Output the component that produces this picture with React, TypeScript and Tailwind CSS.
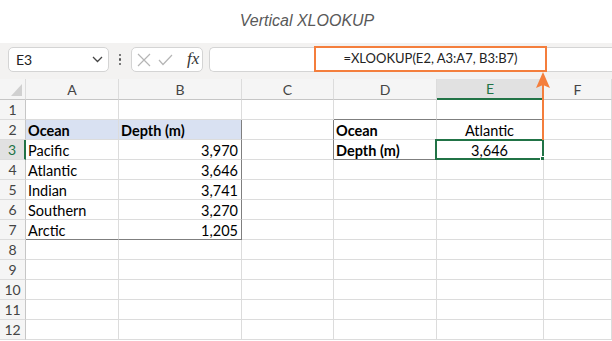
import React from "react";

const COLS = ["A", "B", "C", "D", "E", "F"];

type Cell = { t: string; bold?: boolean; align?: "left" | "right" | "center" };

const DATA: Record<string, Cell> = {
  A2: { t: "Ocean", bold: true },
  B2: { t: "Depth (m)", bold: true },
  A3: { t: "Pacific" },
  B3: { t: "3,970", align: "right" },
  A4: { t: "Atlantic" },
  B4: { t: "3,646", align: "right" },
  A5: { t: "Indian" },
  B5: { t: "3,741", align: "right" },
  A6: { t: "Southern" },
  B6: { t: "3,270", align: "right" },
  A7: { t: "Arctic" },
  B7: { t: "1,205", align: "right" },
  D2: { t: "Ocean", bold: true },
  E2: { t: "Atlantic", align: "center" },
  D3: { t: "Depth (m)", bold: true },
  E3: { t: "3,646", align: "center" },
};

const darkRight = new Set(["B2", "B3", "B4", "B5", "B6", "B7", "C2", "C3", "E2"]);
const darkBottom = new Set(["A7", "B7", "D1", "E1", "D3"]);

function GridCell({ col, row }: { col: string; row: number }) {
  const key = `${col}${row}`;
  const d = DATA[key];
  const rc = darkRight.has(key) ? "border-r-[#7f7f7f]" : "border-r-[#dcdcdc]";
  const bc = darkBottom.has(key) ? "border-b-[#7f7f7f]" : "border-b-[#dcdcdc]";
  const bg = row === 2 && (col === "A" || col === "B") ? "bg-[#d9e1f2]" : "bg-white";
  const align = d?.align === "right" ? "justify-end" : d?.align === "center" ? "justify-center" : "justify-start";
  return (
    <div className={`relative flex items-start ${align} border-r border-b ${rc} ${bc} ${bg} pl-[2px] pr-[3px] pt-[1px]`}>
      {d && (
        <span className={`text-[14.5px] leading-[19px] text-black whitespace-nowrap ${d.bold ? "font-bold" : "font-normal"}`}>
          {d.t}
        </span>
      )}
      {key === "E3" && (
        <>
          <div className="absolute -left-[2px] -top-[1px] -right-[1px] -bottom-[1px] border-2 border-[#217346] pointer-events-none" />
          <div className="absolute -right-[4px] -bottom-[4px] w-[7px] h-[7px] bg-[#217346] border border-white" />
        </>
      )}
    </div>
  );
}

export default function App() {
  const rows = Array.from({ length: 12 }, (_, i) => i + 1);
  return (
    <div className="relative w-[612px] h-[341px] bg-white overflow-hidden font-['Lato',sans-serif]">
      {/* Title */}
      <div className="h-[43px] flex items-center justify-center pl-[2px] pb-[1px]">
        <span className="italic text-[16px] text-[#595959] font-['Liberation_Sans',Arial,sans-serif]">
          Vertical XLOOKUP
        </span>
      </div>

      {/* Toolbar */}
      <div className="h-[36px] bg-[#f3f2f1] flex items-start pt-[4px] pl-[8px]">
        <div className="w-[101px] h-[25px] rounded-[5px] border border-[#d4d4d4] bg-white flex items-center pl-[7px] pr-[5px]">
          <span className="text-[14px] text-[#222] flex-1">E3</span>
          <svg width="11" height="7" viewBox="0 0 11 7">
            <path d="M1 1 L5.5 5.5 L10 1" fill="none" stroke="#444" strokeWidth="1.3" />
          </svg>
        </div>
        <div className="w-[22px] h-[25px] flex flex-col items-center justify-center gap-[2px]">
          <div className="w-[2.5px] h-[2.5px] rounded-full bg-[#555]" />
          <div className="w-[2.5px] h-[2.5px] rounded-full bg-[#555]" />
          <div className="w-[2.5px] h-[2.5px] rounded-full bg-[#555]" />
        </div>
        <div className="w-[72px] h-[25px] rounded-[5px] border border-[#d4d4d4] bg-white flex items-center pl-[5px]">
          <svg width="14" height="14" viewBox="0 0 14 14">
            <path d="M1 1 L13 13 M13 1 L1 13" stroke="#b5b5b5" strokeWidth="1.2" fill="none" />
          </svg>
          <svg width="15" height="12" viewBox="0 0 15 12" className="ml-[7px]">
            <path d="M1 6 L5 10.5 L14 1" stroke="#b5b5b5" strokeWidth="1.2" fill="none" />
          </svg>
          <span className="ml-[14px] italic text-[17px] leading-none text-[#333] font-['Liberation_Serif',serif] -mt-[2px]">
            fx
          </span>
        </div>
        <div className="ml-[6px] flex-1 h-[25px] rounded-l-[5px] border border-r-0 border-[#d4d4d4] bg-white flex items-start pl-[104px]">
          <div className="w-[233px] h-[26px] -mt-[2px] border-2 border-[#f47e3c] flex items-center justify-center">
            <span className="text-[13px] text-[#222] whitespace-nowrap">=XLOOKUP(E2, A3:A7, B3:B7)</span>
          </div>
        </div>
      </div>

      {/* Grid */}
      <div className="grid grid-cols-[26px_93px_123px_92px_103px_107px_1fr] grid-rows-[21px_repeat(12,20px)]">
        <div className="relative bg-[#f5f5f5] border-r border-b border-r-[#dcdcdc] border-b-[#c6c6c6]">
          <svg className="absolute right-[3px] bottom-[3px]" width="11" height="12" viewBox="0 0 11 12">
            <polygon points="0,12 11,12 11,0" fill="#d0d0d0" />
          </svg>
        </div>
        {COLS.map((c) => (
          <div
            key={c}
            className={`flex items-center justify-center border-r border-r-[#dcdcdc] ${
              c === "E"
                ? "bg-[#e1e1e1] text-[#217346] border-b-2 border-b-[#217346]"
                : "bg-[#f5f5f5] text-[#444] border-b border-b-[#c6c6c6]"
            }`}
          >
            <span className="text-[14px]">{c}</span>
          </div>
        ))}
        {rows.map((r) => (
          <React.Fragment key={r}>
            <div
              className={`flex items-center justify-center border-b border-b-[#dcdcdc] ${
                r === 3
                  ? "bg-[#e1e1e1] text-[#217346] border-r-2 border-r-[#217346]"
                  : "bg-[#f5f5f5] text-[#444] border-r border-r-[#c6c6c6]"
              }`}
            >
              <span className="text-[14px]">{r}</span>
            </div>
            {COLS.map((c) => (
              <GridCell key={c} col={c} row={r} />
            ))}
          </React.Fragment>
        ))}
      </div>

      {/* Arrow overlay */}
      <svg className="absolute left-[535px] top-[72px]" width="16" height="70" viewBox="0 0 16 70">
        <line x1="8" y1="10" x2="8" y2="68" stroke="#f47e3c" strokeWidth="2" />
        <polygon points="8,0 1,16 8,13 15,16" fill="#f47e3c" />
      </svg>
    </div>
  );
}
